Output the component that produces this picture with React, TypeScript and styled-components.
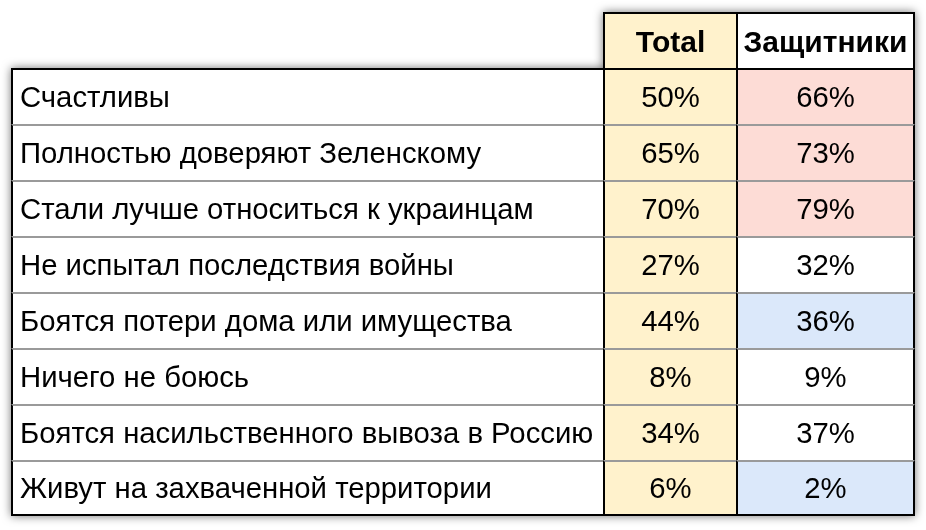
import React from "react";
import styled, { createGlobalStyle } from "styled-components";

const Global = createGlobalStyle`
  html, body { margin: 0; padding: 0; background: #ffffff; }
  body { font-family: "Liberation Sans", Arial, sans-serif; color: #000; }
`;

const Page = styled.div`
  width: 926px;
  height: 530px;
  box-sizing: border-box;
  padding: 12px 0 0 11px;
  background: #fff;
`;

const Grid = styled.div`
  display: grid;
  grid-template-columns: 592px 133px 179px;
  grid-template-rows: 56px repeat(8, 56px);
  width: max-content;
  filter: drop-shadow(0 0 5px rgba(0, 0, 0, 0.55));
`;

type Tone = "none" | "yellow" | "pink" | "blue" | "white";

const bg: Record<Tone, string> = {
  none: "transparent",
  yellow: "#fff2cc",
  pink: "#fddcd6",
  blue: "#dbe8fa",
  white: "#ffffff",
};

const Blank = styled.div`
  background: transparent;
`;

const HeadCell = styled.div<{ $tone: Tone; $last?: boolean }>`
  box-sizing: border-box;
  background: ${(p) => bg[p.$tone]};
  border-top: 2px solid #000;
  border-left: 2px solid #000;
  border-right: ${(p) => (p.$last ? "2px solid #000" : "none")};
  display: flex;
  align-items: center;
  justify-content: center;
  font-weight: bold;
  font-size: 30px;
  padding-top: 1px;
  white-space: nowrap;
`;

const Cell = styled.div<{
  $tone: Tone;
  $first?: boolean;
  $last?: boolean;
  $bottom?: boolean;
  $label?: boolean;
}>`
  box-sizing: border-box;
  background: ${(p) => bg[p.$tone]};
  border-top: 2px solid ${(p) => (p.$first ? "#000" : "#9a9a9a")};
  border-left: 2px solid #000;
  border-right: ${(p) => (p.$last ? "2px solid #000" : "none")};
  border-bottom: ${(p) => (p.$bottom ? "2px solid #000" : "none")};
  display: flex;
  align-items: center;
  justify-content: ${(p) => (p.$label ? "flex-start" : "center")};
  padding-left: ${(p) => (p.$label ? "7px" : "0")};
  font-size: 29.3px;
  white-space: nowrap;
`;

type Row = { label: string; total: string; def: string; tone: Tone };

const rows: Row[] = [
  { label: "Счастливы", total: "50%", def: "66%", tone: "pink" },
  { label: "Полностью доверяют Зеленскому", total: "65%", def: "73%", tone: "pink" },
  { label: "Стали лучше относиться к украинцам", total: "70%", def: "79%", tone: "pink" },
  { label: "Не испытал последствия войны", total: "27%", def: "32%", tone: "white" },
  { label: "Боятся потери дома или имущества", total: "44%", def: "36%", tone: "blue" },
  { label: "Ничего не боюсь", total: "8%", def: "9%", tone: "white" },
  { label: "Боятся насильственного вывоза в Россию", total: "34%", def: "37%", tone: "white" },
  { label: "Живут на захваченной территории", total: "6%", def: "2%", tone: "blue" },
];

export default function App() {
  return (
    <>
      <Global />
      <Page>
        <Grid>
          <Blank />
          <HeadCell $tone="yellow">Total</HeadCell>
          <HeadCell $tone="white" $last>
            Защитники
          </HeadCell>
          {rows.map((r, i) => {
            const first = i === 0;
            const bottom = i === rows.length - 1;
            return (
              <React.Fragment key={r.label}>
                <Cell $tone="white" $label $first={first} $bottom={bottom}>
                  {r.label}
                </Cell>
                <Cell $tone="yellow" $first={first} $bottom={bottom}>
                  {r.total}
                </Cell>
                <Cell $tone={r.tone} $first={first} $bottom={bottom} $last>
                  {r.def}
                </Cell>
              </React.Fragment>
            );
          })}
        </Grid>
      </Page>
    </>
  );
}
